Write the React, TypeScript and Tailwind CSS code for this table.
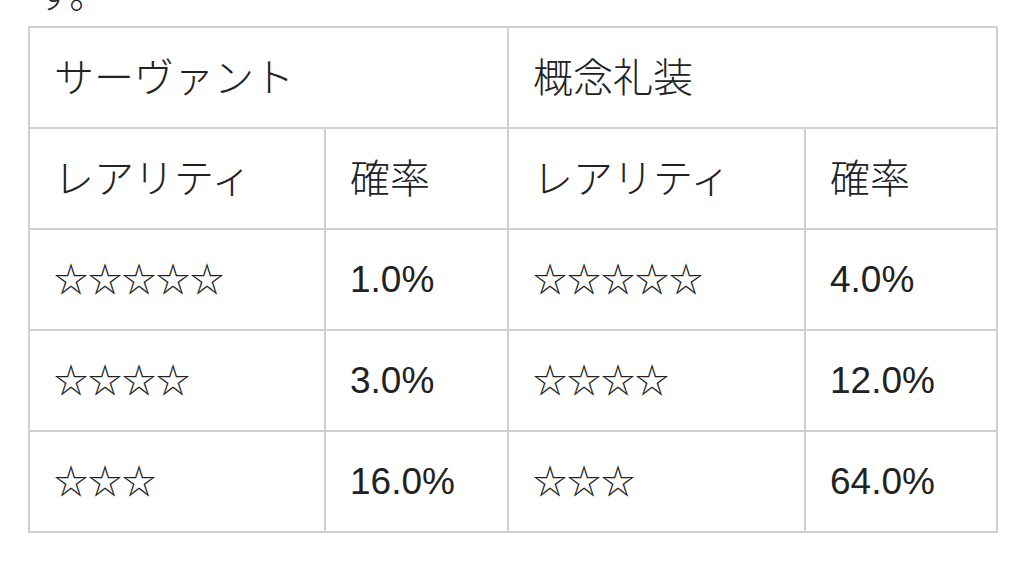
const rows = [
  { servant: '☆☆☆☆☆', sRate: '1.0%', craft: '☆☆☆☆☆', cRate: '4.0%' },
  { servant: '☆☆☆☆', sRate: '3.0%', craft: '☆☆☆☆', cRate: '12.0%' },
  { servant: '☆☆☆', sRate: '16.0%', craft: '☆☆☆', cRate: '64.0%' },
];

const cell = 'border-2 border-[#d0d0d0] pl-[24px] text-left align-middle h-[101px] font-light';
const jp = 'text-[40px]';
const stars = 'text-[34px] font-normal';

export default function App() {
  return (
    <div
      className="w-[1024px] h-[574px] overflow-hidden bg-white text-[#222] text-[37px]"
      style={{ fontFamily: '"Liberation Sans", "Noto Sans CJK JP", sans-serif' }}
    >
      {/* paragraph tail cut off by the top edge */}
      <div className="mt-[-22px] pl-[36px] leading-none font-light">す。</div>

      <table className="mt-[11px] ml-[28px] w-[968px] border-collapse table-fixed">
        <colgroup>
          <col className="w-[296px]" />
          <col className="w-[183px]" />
          <col className="w-[297px]" />
          <col className="w-[192px]" />
        </colgroup>
        <thead>
          <tr>
            <th colSpan={2} className={cell}>
              <span className={jp}>サーヴァント</span>
            </th>
            <th colSpan={2} className={cell}>
              <span className={jp}>概念礼装</span>
            </th>
          </tr>
        </thead>
        <tbody>
          <tr>
            <td className={cell}><span className={jp}>レアリティ</span></td>
            <td className={cell}><span className={jp}>確率</span></td>
            <td className={cell}><span className={jp}>レアリティ</span></td>
            <td className={cell}><span className={jp}>確率</span></td>
          </tr>
          {rows.map((r, i) => (
            <tr key={i}>
              <td className={cell}><span className={stars}>{r.servant}</span></td>
              <td className={cell}>{r.sRate}</td>
              <td className={cell}><span className={stars}>{r.craft}</span></td>
              <td className={cell}>{r.cRate}</td>
            </tr>
          ))}
        </tbody>
      </table>
    </div>
  );
}
